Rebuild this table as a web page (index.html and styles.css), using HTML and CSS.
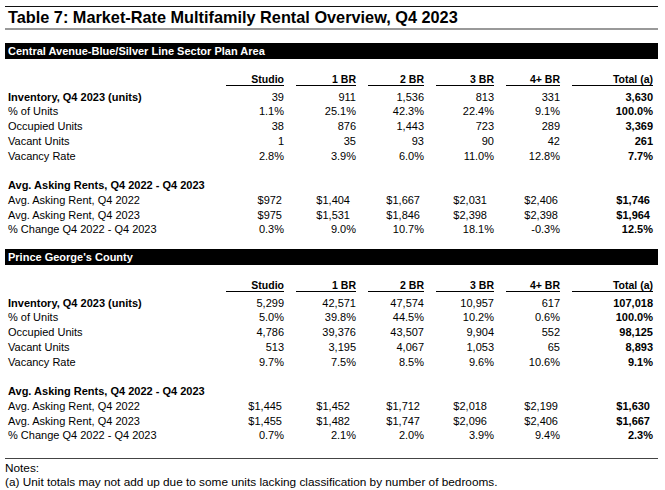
FILE: index.html
```html
<!DOCTYPE html>
<html lang="en">
<head>
<meta charset="utf-8">
<title>Table 7: Market-Rate Multifamily Rental Overview, Q4 2023</title>
<link rel="stylesheet" href="styles.css">
</head>
<body>
<div class="page">
  <h1 class="title">Table 7: Market-Rate Multifamily Rental Overview, Q4 2023</h1>

  <section class="sec">
    <div class="bar">Central Avenue-Blue/Silver Line Sector Plan Area</div>
    <div class="row head">
      <div></div><div class="hd">Studio</div><div class="hd">1 BR</div><div class="hd">2 BR</div><div class="hd">3 BR</div><div class="hd">4+ BR</div><div class="hd">Total (a)</div>
    </div>
    <div class="row bold-label"><div class="lbl">Inventory, Q4 2023 (units)</div><div>39</div><div>911</div><div>1,536</div><div>813</div><div>331</div><div class="tot">3,630</div></div>
    <div class="row"><div class="lbl">% of Units</div><div>1.1%</div><div>25.1%</div><div>42.3%</div><div>22.4%</div><div>9.1%</div><div class="tot">100.0%</div></div>
    <div class="row"><div class="lbl">Occupied Units</div><div>38</div><div>876</div><div>1,443</div><div>723</div><div>289</div><div class="tot">3,369</div></div>
    <div class="row"><div class="lbl">Vacant Units</div><div>1</div><div>35</div><div>93</div><div>90</div><div>42</div><div class="tot">261</div></div>
    <div class="row"><div class="lbl">Vacancy Rate</div><div>2.8%</div><div>3.9%</div><div>6.0%</div><div>11.0%</div><div>12.8%</div><div class="tot">7.7%</div></div>
    <div class="row subhead"><div class="lbl">Avg. Asking Rents, Q4 2022 - Q4 2023</div></div>
    <div class="row money"><div class="lbl">Avg. Asking Rent, Q4 2022</div><div class="c1">$972</div><div class="c2">$1,404</div><div class="c3">$1,667</div><div class="c4">$2,031</div><div class="c5">$2,406</div><div class="tot c6">$1,746</div></div>
    <div class="row money"><div class="lbl">Avg. Asking Rent, Q4 2023</div><div class="c1">$975</div><div class="c2">$1,531</div><div class="c3">$1,846</div><div class="c4">$2,398</div><div class="c5">$2,398</div><div class="tot c6">$1,964</div></div>
    <div class="row"><div class="lbl">% Change Q4 2022 - Q4 2023</div><div>0.3%</div><div>9.0%</div><div>10.7%</div><div>18.1%</div><div>-0.3%</div><div class="tot">12.5%</div></div>
  </section>

  <section class="sec">
    <div class="bar">Prince George's County</div>
    <div class="row head">
      <div></div><div class="hd">Studio</div><div class="hd">1 BR</div><div class="hd">2 BR</div><div class="hd">3 BR</div><div class="hd">4+ BR</div><div class="hd">Total (a)</div>
    </div>
    <div class="row bold-label"><div class="lbl">Inventory, Q4 2023 (units)</div><div>5,299</div><div>42,571</div><div>47,574</div><div>10,957</div><div>617</div><div class="tot">107,018</div></div>
    <div class="row"><div class="lbl">% of Units</div><div>5.0%</div><div>39.8%</div><div>44.5%</div><div>10.2%</div><div>0.6%</div><div class="tot">100.0%</div></div>
    <div class="row"><div class="lbl">Occupied Units</div><div>4,786</div><div>39,376</div><div>43,507</div><div>9,904</div><div>552</div><div class="tot">98,125</div></div>
    <div class="row"><div class="lbl">Vacant Units</div><div>513</div><div>3,195</div><div>4,067</div><div>1,053</div><div>65</div><div class="tot">8,893</div></div>
    <div class="row"><div class="lbl">Vacancy Rate</div><div>9.7%</div><div>7.5%</div><div>8.5%</div><div>9.6%</div><div>10.6%</div><div class="tot">9.1%</div></div>
    <div class="row subhead"><div class="lbl">Avg. Asking Rents, Q4 2022 - Q4 2023</div></div>
    <div class="row money"><div class="lbl">Avg. Asking Rent, Q4 2022</div><div class="c1">$1,445</div><div class="c2">$1,452</div><div class="c3">$1,712</div><div class="c4">$2,018</div><div class="c5">$2,199</div><div class="tot c6">$1,630</div></div>
    <div class="row money"><div class="lbl">Avg. Asking Rent, Q4 2023</div><div class="c1">$1,455</div><div class="c2">$1,482</div><div class="c3">$1,747</div><div class="c4">$2,096</div><div class="c5">$2,406</div><div class="tot c6">$1,667</div></div>
    <div class="row"><div class="lbl">% Change Q4 2022 - Q4 2023</div><div>0.7%</div><div>2.1%</div><div>2.0%</div><div>3.9%</div><div>9.4%</div><div class="tot">2.3%</div></div>
  </section>

  <div class="notes">
    <div>Notes:</div>
    <div>(a) Unit totals may not add up due to some units lacking classification by number of bedrooms.</div>
  </div>
</div>
</body>
</html>
```

FILE: styles.css
```css
* { box-sizing: border-box; }

html, body {
  margin: 0;
  padding: 0;
  background: #ffffff;
}

body {
  font-family: "Liberation Sans", Arial, sans-serif;
  color: #000;
  font-size: 11px;
}

.page {
  width: 665px;
  padding: 6px 7px 0 5px;
}

.title {
  margin: 0;
  font-size: 16.3px;
  font-weight: bold;
  line-height: 21px;
  padding-left: 3px;
  border-top: 1px solid #111;
  border-bottom: 2px solid #999;
  white-space: nowrap;
}

.sec {
  margin-top: 13px;
}

.sec + .sec {
  margin-top: 12px;
}

.bar {
  background: #000;
  color: #fff;
  font-weight: bold;
  font-size: 11px;
  height: 16px;
  line-height: 16px;
  padding-left: 3px;
}

.row {
  display: grid;
  grid-template-columns: 209px 70px 72px 68px 70px 66px 93px;
  line-height: 14.75px;
  height: 14.75px;
  text-align: right;
  white-space: nowrap;
}

.row .lbl {
  text-align: left;
  padding-left: 3px;
}

.head {
  margin-top: 14px;
  height: 13px;
  line-height: 12px;
  margin-bottom: 3.6px;
}

.hd {
  margin-left: 12px;
  font-weight: bold;
  font-size: 10.5px;
  border-bottom: 1px solid #000;
}

.bold-label .lbl,
.subhead .lbl {
  font-weight: bold;
}

.subhead {
  margin-top: 14.75px;
}

.tot {
  font-weight: bold;
}

.money .c1 { padding-right: 2px; }
.money .c2 { padding-right: 6px; }
.money .c3 { padding-right: 4px; }
.money .c4 { padding-right: 7px; }
.money .c5 { padding-right: 2px; }
.money .c6 { padding-right: 3px; }

.notes {
  margin-top: 15px;
  border-top: 1px solid #444;
  padding-top: 2px;
  font-size: 11.8px;
  line-height: 14px;
}
```
